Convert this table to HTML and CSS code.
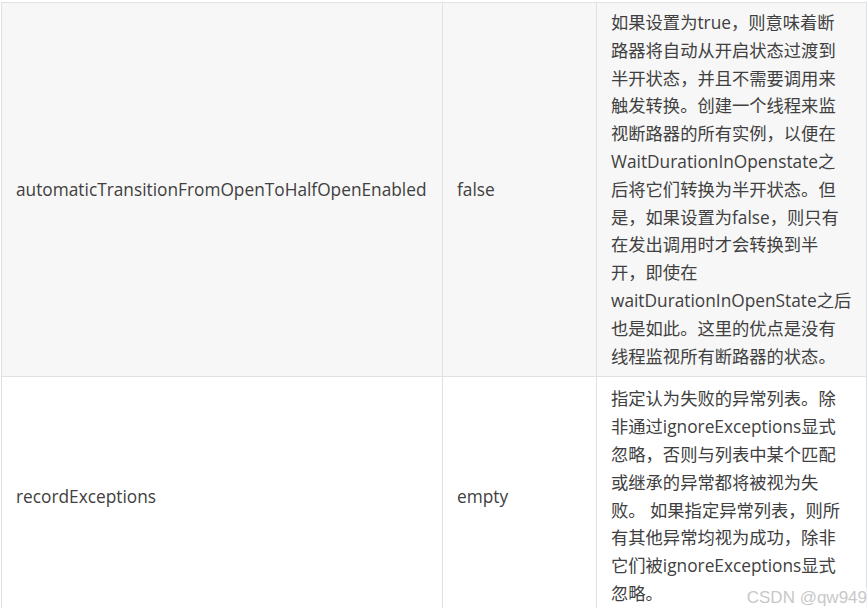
FILE: index.html
```html
<!DOCTYPE html>
<html lang="zh-CN">
<head>
<meta charset="utf-8">
<title>CircuitBreaker 配置</title>
<link rel="stylesheet" href="styles.css">
</head>
<body>
<div class="frame">
  <table class="config">
    <colgroup>
      <col class="c-name">
      <col class="c-default">
      <col class="c-desc">
    </colgroup>
    <tbody>
      <tr class="stripe">
        <td>automaticTransitionFromOpenToHalfOpenEnabled</td>
        <td>false</td>
        <td class="desc">如果设置为true，则意味着断<br>路器将自动从开启状态过渡到<br>半开状态，并且不需要调用来<br>触发转换。创建一个线程来监<br>视断路器的所有实例，以便在<br>WaitDurationInOpenstate之<br>后将它们转换为半开状态。但<br>是，如果设置为false，则只有<br>在发出调用时才会转换到半<br>开，即使在<br>waitDurationInOpenState之后<br>也是如此。这里的优点是没有<br>线程监视所有断路器的状态。</td>
      </tr>
      <tr class="plain">
        <td>recordExceptions</td>
        <td>empty</td>
        <td class="desc">指定认为失败的异常列表。除<br>非通过ignoreExceptions显式<br>忽略，否则与列表中某个匹配<br>或继承的异常都将被视为失<br>败。 如果指定异常列表，则所<br>有其他异常均视为成功，除非<br>它们被ignoreExceptions显式<br>忽略。</td>
      </tr>
    </tbody>
  </table>
  <div class="watermark">CSDN @qw949</div>
</div>
</body>
</html>
```
FILE: styles.css
```css
html, body {
  margin: 0;
  padding: 0;
  background: #ffffff;
}

.frame {
  position: relative;
  width: 868px;
  height: 608px;
  overflow: hidden;
  padding-top: 2px;
  padding-left: 1px;
  box-sizing: border-box;
}

.config {
  border-collapse: collapse;
  table-layout: fixed;
  width: 865px;
  font-family: "Open Sans", "Noto Sans CJK SC", sans-serif;
  font-size: 17.3px;
  line-height: 27.8px;
  color: #404040;
}

.c-name { width: 441px; }
.c-default { width: 154px; }
.c-desc { width: 270px; }

.config td {
  border: 1px solid #dfe2e5;
  padding: 6px 14px;
  vertical-align: middle;
  white-space: nowrap;
}

.config tr.stripe td {
  background: #f7f7f7;
}

.config tr.plain td {
  padding-top: 8px;
  padding-bottom: 8px;
}

.watermark {
  position: absolute;
  right: 1px;
  bottom: 0;
  font-family: "Liberation Sans", Arial, sans-serif;
  font-size: 17px;
  color: #c8c8c8;
  background: rgba(255, 255, 255, 0.6);
  line-height: 20px;
}
```
